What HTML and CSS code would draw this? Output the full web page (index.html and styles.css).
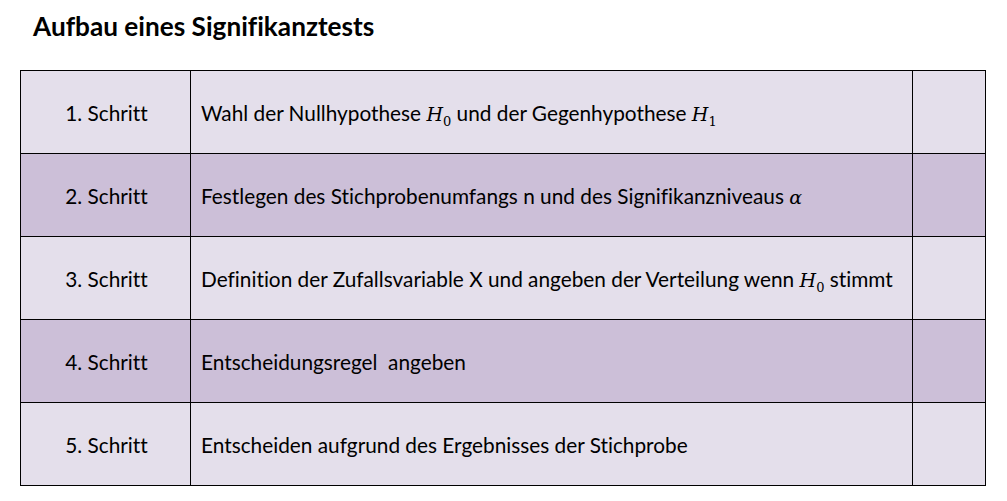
FILE: index.html
```html
<!DOCTYPE html>
<html lang="de">
<head>
<meta charset="utf-8">
<title>Aufbau eines Signifikanztests</title>
<link rel="stylesheet" href="styles.css">
</head>
<body>
<h1 class="title">Aufbau eines Signifikanztests</h1>
<table class="steps">
  <colgroup>
    <col class="col-step">
    <col class="col-desc">
    <col class="col-extra">
  </colgroup>
  <tr class="row-light">
    <td class="step">1. Schritt</td>
    <td class="desc">Wahl der Nullhypothese <span class="math">H<sub>0</sub></span> und der Gegenhypothese <span class="math">H<sub>1</sub></span></td>
    <td class="extra"></td>
  </tr>
  <tr class="row-dark">
    <td class="step">2. Schritt</td>
    <td class="desc">Festlegen des Stichprobenumfangs n und des Signifikanzniveaus <span class="math">α</span></td>
    <td class="extra"></td>
  </tr>
  <tr class="row-light">
    <td class="step">3. Schritt</td>
    <td class="desc">Definition der Zufallsvariable X und angeben der Verteilung wenn <span class="math">H<sub>0</sub></span> stimmt</td>
    <td class="extra"></td>
  </tr>
  <tr class="row-dark">
    <td class="step">4. Schritt</td>
    <td class="desc">Entscheidungsregel&nbsp; angeben</td>
    <td class="extra"></td>
  </tr>
  <tr class="row-light">
    <td class="step">5. Schritt</td>
    <td class="desc">Entscheiden aufgrund des Ergebnisses der Stichprobe</td>
    <td class="extra"></td>
  </tr>
</table>
</body>
</html>
```
FILE: styles.css
```css
html, body {
  margin: 0;
  padding: 0;
  background: #ffffff;
}

body {
  font-family: "Lato", "Open Sans", sans-serif;
  font-variant-ligatures: none;
  color: #000;
}

.title {
  margin: 0;
  padding: 11px 0 0 33px;
  height: 70px;
  line-height: 30px;
  box-sizing: border-box;
  font-size: 26.2px;
  font-weight: 700;
}

.steps {
  margin-left: 20px;
  border-collapse: collapse;
  table-layout: fixed;
  width: 965px;
}

.col-step { width: 170px; }
.col-desc { width: 722px; }
.col-extra { width: 73px; }

.steps td {
  border: 1px solid #000;
  height: 82px;
  padding: 0;
  font-size: 20.8px;
  vertical-align: middle;
}

.row-light td { background: #e4dfeb; }
.row-dark td { background: #ccbfd8; }

.step {
  text-align: center;
  padding-left: 2px !important;
}

.desc {
  padding-left: 10px !important;
  white-space: nowrap;
}

.math {
  font-family: "DejaVu Serif", "Liberation Serif", serif;
  font-style: italic;
  font-size: 19px;
}

.math sub {
  font-style: normal;
  font-size: 13px;
  vertical-align: -5px;
  line-height: 0;
}
```
